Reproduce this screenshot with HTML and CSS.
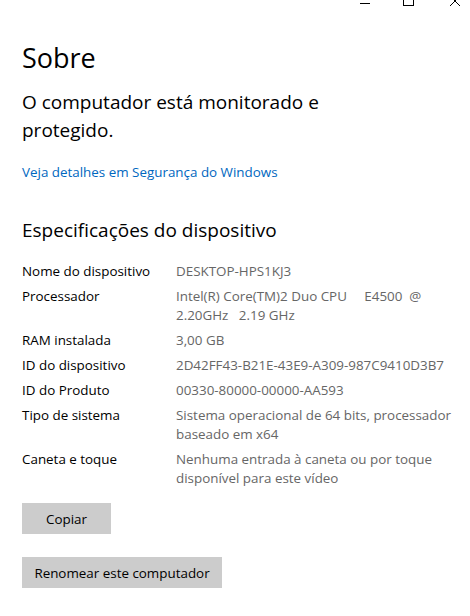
FILE: index.html
```html
<!DOCTYPE html>
<html lang="pt-BR">
<head>
<meta charset="utf-8">
<title>Sobre</title>
<link rel="stylesheet" href="styles.css">
</head>
<body>
<div class="titlebar">
  <span class="tb-btn">
    <svg width="46" height="10" viewBox="0 0 46 10"><line x1="28" y1="3.5" x2="38" y2="3.5" stroke="#000" stroke-width="1"/></svg>
  </span>
  <span class="tb-btn">
    <svg width="46" height="10" viewBox="0 0 46 10"><rect x="25.5" y="-5.5" width="10" height="11" fill="none" stroke="#000" stroke-width="1"/></svg>
  </span>
  <span class="tb-btn">
    <svg width="46" height="10" viewBox="0 0 46 10"><path d="M26 -4 L36 6 M36 -4 L26 6" stroke="#000" stroke-width="1" fill="none"/></svg>
  </span>
</div>
<main class="content">
  <h1 class="title">Sobre</h1>
  <p class="status">O computador está monitorado e protegido.</p>
  <a class="link" href="#">Veja detalhes em Segurança do Windows</a>
  <h2 class="section">Especificações do dispositivo</h2>
  <dl class="specs">
    <dt>Nome do dispositivo</dt><dd>DESKTOP-HPS1KJ3</dd>
    <dt>Processador</dt><dd>Intel(R) Core(TM)2 Duo CPU&nbsp;&nbsp;&nbsp;&nbsp; E4500&nbsp; @ 2.20GHz&nbsp;&nbsp; 2.19 GHz</dd>
    <dt>RAM instalada</dt><dd>3,00 GB</dd>
    <dt>ID do dispositivo</dt><dd>2D42FF43-B21E-43E9-A309-987C9410D3B7</dd>
    <dt>ID do Produto</dt><dd>00330-80000-00000-AA593</dd>
    <dt>Tipo de sistema</dt><dd>Sistema operacional de 64 bits, processador baseado em x64</dd>
    <dt>Caneta e toque</dt><dd>Nenhuma entrada à caneta ou por toque disponível para este vídeo</dd>
  </dl>
  <div class="actions">
    <button class="btn btn-copy">Copiar</button>
    <button class="btn btn-rename">Renomear este computador</button>
  </div>
</main>
</body>
</html>
```

FILE: styles.css
```css
html, body {
  margin: 0;
  padding: 0;
  background: #ffffff;
}
body {
  font-family: "Open Sans", "Noto Sans", "Liberation Sans", sans-serif;
  color: #000;
  width: 470px;
  height: 616px;
  overflow: hidden;
}
.titlebar {
  height: 10px;
  display: flex;
  justify-content: flex-end;
  overflow: hidden;
}
.tb-btn {
  display: block;
  width: 46px;
  height: 10px;
}
.tb-btn svg { display: block; }
.content {
  padding-left: 22px;
}
.title {
  margin: 30px 0 0;
  font-size: 27px;
  font-weight: 400;
  line-height: 36px;
}
.status {
  margin: 12px 0 0;
  font-size: 19px;
  line-height: 28px;
  width: 330px;
}
.link {
  display: block;
  margin-top: 18px;
  font-size: 13.4px;
  line-height: 20px;
  color: #0067c0;
  text-decoration: none;
}
.section {
  margin: 34px 0 0;
  font-size: 19px;
  font-weight: 400;
  line-height: 28px;
}
.specs {
  margin: 18px 0 0;
  display: grid;
  grid-template-columns: 154px 280px;
  row-gap: 6px;
  font-size: 13.4px;
  line-height: 19px;
}
.specs dt { margin: 0; color: #000; }
.specs dd { margin: 0; color: #666; }
.actions {
  margin-top: 15px;
  display: flex;
  flex-direction: column;
  align-items: flex-start;
  gap: 23px;
}
.btn {
  border: none;
  background: #cccccc;
  color: #000;
  font-family: inherit;
  font-size: 13.4px;
  height: 31px;
  padding: 0;
  margin: 0;
  white-space: nowrap;
  text-align: center;
}
.btn-copy { width: 89px; }
.btn-rename { width: 200px; }
```
